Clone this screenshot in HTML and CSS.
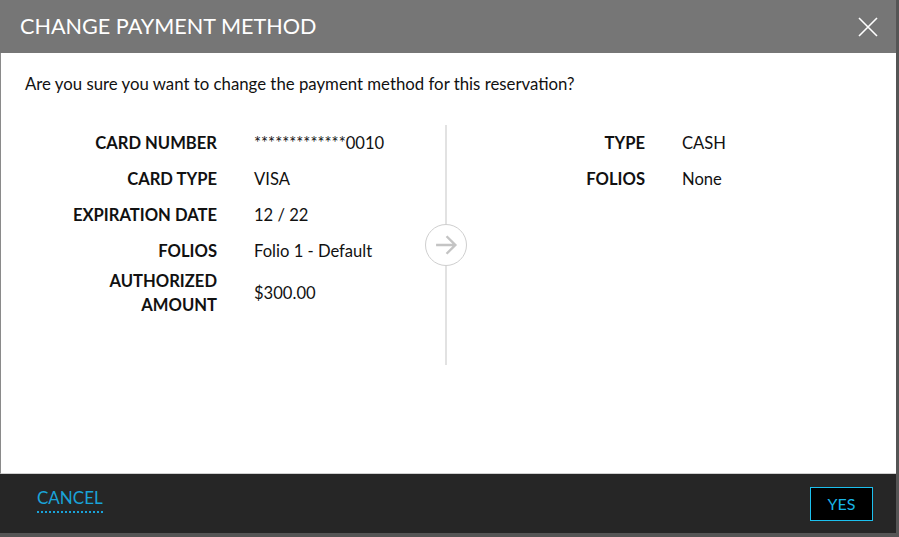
FILE: index.html
```html
<!DOCTYPE html>
<html lang="en">
<head>
    <meta charset="UTF-8">
    <meta name="viewport" content="width=device-width, initial-scale=1.0">
    <title>Change Payment Method</title>
    <link rel="stylesheet" href="styles.css">
</head>
<body>
    <div class="modal">
        <div class="modal-header">
            <h1 class="modal-title">CHANGE PAYMENT METHOD</h1>
            <button class="close" aria-label="Close">
                <svg width="20" height="20" viewBox="0 0 20 20">
                    <path d="M1 1L19 19M19 1L1 19" stroke="#fff" stroke-width="1.6" fill="none"/>
                </svg>
            </button>
        </div>

        <div class="modal-body">
            <p class="question">Are you sure you want to change the payment method for this reservation?</p>

            <div class="compare">
                <div class="side side-from">
                    <div class="details details-from">
                        <div class="label">CARD NUMBER</div>
                        <div class="value">*************0010</div>
                        <div class="label">CARD TYPE</div>
                        <div class="value">VISA</div>
                        <div class="label">EXPIRATION DATE</div>
                        <div class="value">12 / 22</div>
                        <div class="label">FOLIOS</div>
                        <div class="value">Folio 1 - Default</div>
                        <div class="label two-line">AUTHORIZED<br>AMOUNT</div>
                        <div class="value">$300.00</div>
                    </div>
                </div>

                <div class="divider">
                    <span class="arrow-circle">
                        <svg width="28" height="28" viewBox="0 0 24 24">
                            <path d="M3.5 12H20M12.5 4.5L20 12L12.5 19.5" stroke="#c4c4c4" stroke-width="2.1" fill="none"/>
                        </svg>
                    </span>
                </div>

                <div class="side side-to">
                    <div class="details details-to">
                        <div class="label">TYPE</div>
                        <div class="value">CASH</div>
                        <div class="label">FOLIOS</div>
                        <div class="value">None</div>
                    </div>
                </div>
            </div>
        </div>

        <div class="modal-footer">
            <a href="#" class="cancel">CANCEL</a>
            <button class="yes">YES</button>
        </div>
    </div>
</body>
</html>
```

FILE: styles.css
```css
body
{
    margin: 0;
    background: #555;
    font-family: Lato, "Noto Sans", sans-serif;
    height: 537px;
    overflow: hidden;
}

.modal
{
    width: 896px;
    height: 533px;
    display: flex;
    flex-direction: column;
}

.modal-header
{
    height: 53px;
    background: #767676;
    display: flex;
    align-items: center;
    justify-content: space-between;
    padding: 0 18px 0 20px;
    flex-shrink: 0;
}

.modal-title
{
    margin: 0;
    font-size: 21.6px;
    font-weight: normal;
    color: #fff;
    margin-top: -2px;
}

.close
{
    background: none;
    border: none;
    padding: 0;
    width: 20px;
    height: 20px;
    cursor: pointer;
    margin-top: 1px;
}

.modal-body
{
    height: 420px;
    background: #fff;
    border-left: 1px solid #8a8a8a;
    border-bottom: 1px solid #d0d0d0;
    color: #111;
}

.question
{
    margin: 0;
    padding: 21px 0 0 24px;
    font-size: 16.8px;
    line-height: 20px;
}

.compare
{
    display: flex;
    margin-top: 31px;
}

.side-from
{
    width: 420px;
    padding-left: 24px;
}

.side-to
{
    padding-left: 25px;
}

.details
{
    display: grid;
    column-gap: 37px;
    font-size: 16.6px;
    line-height: 36px;
}

.details-from
{
    grid-template-columns: 192px auto;
}

.details-to
{
    grid-template-columns: 173px auto;
}

.label
{
    font-weight: bold;
    text-align: right;
}

.label.two-line
{
    line-height: 24px;
}

.value
{
    align-self: center;
}

.divider
{
    width: 2px;
    height: 240px;
    background: #e2e2e2;
    position: relative;
}

.arrow-circle
{
    position: absolute;
    left: -20px;
    top: 99px;
    width: 40px;
    height: 40px;
    border: 1.5px solid #cfcfcf;
    border-radius: 50%;
    background: #fff;
    display: flex;
    align-items: center;
    justify-content: center;
}

.modal-footer
{
    height: 59px;
    background: #262626;
    display: flex;
    align-items: center;
    justify-content: space-between;
    padding: 0 23px 0 37px;
    flex-shrink: 0;
}

.cancel
{
    color: #1aa3d9;
    font-size: 17px;
    text-decoration: none;
    border-bottom: 2px dotted #1aa3d9;
    padding-bottom: 3px;
    margin-top: -8px;
}

.yes
{
    background: #000;
    color: #19b5e6;
    border: 1.5px solid #1cc0ee;
    font-family: Lato, "Noto Sans", sans-serif;
    font-size: 16px;
    width: 63px;
    height: 34px;
    padding: 0;
}
```
